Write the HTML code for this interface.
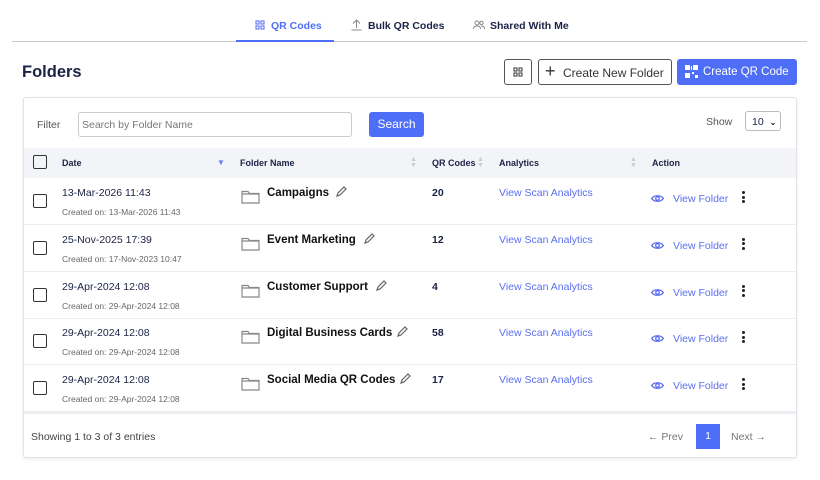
<!DOCTYPE html>
<html><head><style>
*{box-sizing:border-box;margin:0;padding:0}
body{width:820px;height:480px;background:#fff;font-family:"Liberation Sans",sans-serif;color:#1b2245;position:relative;overflow:hidden}
.a{position:absolute}
.tab{font-size:10.5px;font-weight:bold;top:20px}
.btn{border:1px solid #555;border-radius:3px;background:#fff}
.hd{font-size:9px;font-weight:bold;top:158px}
.cb{width:14px;height:14px;border:1.6px solid #333;border-radius:2px}
.d1{font-size:10.5px;color:#1b2245}
.d2{font-size:8.5px;color:#666}
.nm{font-size:11.5px;font-weight:bold;color:#111}
.lnk{font-size:10.5px;color:#5a6ff0}
.sort{font-size:7px;color:#ccc;line-height:6px}
</style></head><body>
<div class="a" style="left:12px;top:41px;width:795px;height:1px;background:#ccc"></div>
<div class="a" style="left:236px;top:40px;width:98px;height:2px;background:#4f6ef7"></div>
<svg class="a" style="left:255px;top:20px" width="10" height="10" viewBox="0 0 10 10" fill="none" stroke="#6b7ff5" stroke-width="1.2"><rect x="1" y="1" width="3" height="3"/><rect x="6" y="1" width="3" height="3"/><rect x="1" y="6" width="3" height="3"/><rect x="6" y="6" width="3" height="3"/></svg>
<div class="a tab" style="left:271px;color:#4f6ef7">QR Codes</div>
<svg class="a" style="left:351px;top:19px" width="11" height="12" viewBox="0 0 11 12" fill="none" stroke="#888" stroke-width="1"><path d="M5.5 9V1M2 4.5l3.5-3.5 3.5 3.5M0.5 11h10"/></svg>
<div class="a tab" style="left:368px">Bulk QR Codes</div>
<svg class="a" style="left:473px;top:20px" width="12" height="10" viewBox="0 0 12 10" fill="none" stroke="#888" stroke-width="1"><circle cx="4" cy="3" r="2"/><circle cx="8.5" cy="3" r="1.7"/><path d="M0.5 9c0-2 1.5-3 3.5-3s3.5 1 3.5 3M8 6c2 0 3.5 1 3.5 3"/></svg>
<div class="a tab" style="left:490px">Shared With Me</div>
<div class="a" style="left:22px;top:63px;font-size:16.5px;font-weight:bold;color:#1b2245">Folders</div>
<div class="a btn" style="left:504px;top:59px;width:28px;height:26px"></div>
<svg class="a" style="left:513px;top:67px" width="10" height="10" viewBox="0 0 10 10" fill="none" stroke="#444" stroke-width="1.1"><rect x="1" y="1" width="3" height="3"/><rect x="6" y="1" width="3" height="3"/><rect x="1" y="6" width="3" height="3"/><rect x="6" y="6" width="3" height="3"/></svg>
<div class="a btn" style="left:538px;top:59px;width:134px;height:26px"></div>
<div class="a" style="left:545px;top:60px;font-size:18px;color:#333;line-height:22px">+</div>
<div class="a" style="left:563px;top:66px;font-size:12px;color:#333">Create New Folder</div>
<div class="a" style="left:677px;top:59px;width:120px;height:26px;background:#4f6ef7;border-radius:3px"></div>
<svg class="a" style="left:685px;top:65px" width="13" height="13" viewBox="0 0 13 13" fill="#fff"><rect x="0" y="0" width="5" height="5"/><rect x="8" y="0" width="5" height="5"/><rect x="0" y="8" width="5" height="5"/><rect x="7" y="7" width="2" height="2"/><rect x="10" y="10" width="3" height="3"/><rect x="6" y="1" width="1" height="4"/></svg>
<div class="a" style="left:703px;top:66px;font-size:11.5px;color:#fff">Create QR Code</div>
<div class="a" style="left:23px;top:97px;width:774px;height:361px;border:1px solid #e3e3e8;border-radius:3px;box-shadow:0 1px 3px rgba(0,0,0,.08)"></div>
<div class="a" style="left:37px;top:119px;font-size:10.5px;color:#555">Filter</div>
<div class="a" style="left:78px;top:112px;width:274px;height:25px;border:1px solid #ccc;border-radius:3px"></div>
<div class="a" style="left:82px;top:119px;font-size:10.5px;color:#777">Search by Folder Name</div>
<div class="a" style="left:369px;top:112px;width:55px;height:25px;background:#4f6ef7;border-radius:3px;color:#fff;font-size:12px;text-align:center;line-height:25px">Search</div>
<div class="a" style="left:706px;top:116px;font-size:10.5px;color:#555">Show</div>
<div class="a" style="left:745px;top:111px;width:36px;height:20px;border:1px solid #bbb;border-radius:3px;font-size:10.5px;padding:4px 0 0 6px">10 <span style="font-size:8px;font-weight:bold;margin-left:3px">&#8964;</span></div>
<div class="a" style="left:24px;top:148px;width:772px;height:30px;background:#f3f4f8"></div>
<div class="a cb" style="left:33px;top:155px"></div>
<div class="a hd" style="left:62px">Date</div>
<div class="a" style="left:217px;top:158px;font-size:8px;color:#6b7ff5">&#9660;</div>
<div class="a hd" style="left:240px">Folder Name</div>
<div class="a sort" style="left:410px;top:157px">▲<br>▼</div>
<div class="a hd" style="left:432px">QR Codes</div>
<div class="a sort" style="left:477px;top:157px">▲<br>▼</div>
<div class="a hd" style="left:499px">Analytics</div>
<div class="a sort" style="left:630px;top:157px">▲<br>▼</div>
<div class="a hd" style="left:652px">Action</div>
<div id="rows"></div>
<script>
var R=[["13-Mar-2026 11:43","13-Mar-2026 11:43","Campaigns",20,336],["25-Nov-2025 17:39","17-Nov-2023 10:47","Event Marketing",12,364],["29-Apr-2024 12:08","29-Apr-2024 12:08","Customer Support",4,376],["29-Apr-2024 12:08","29-Apr-2024 12:08","Digital Business Cards",58,397],["29-Apr-2024 12:08","29-Apr-2024 12:08","Social Media QR Codes",17,400]];
var h="";R.forEach(function(r,i){var y=179+i*46.8;
h+='<div class="a" style="left:24px;top:'+(y+45)+'px;width:772px;height:1px;background:#ececf0"></div>';
h+='<div class="a cb" style="left:33px;top:'+(y+15)+'px"></div>';
h+='<div class="a d1" style="left:62px;top:'+(y+8)+'px">'+r[0]+'</div>';
h+='<div class="a d2" style="left:62px;top:'+(y+28)+'px">Created on: '+r[1]+'</div>';
h+='<svg class="a" style="left:241px;top:'+(y+10)+'px" width="19" height="15" viewBox="0 0 19 15" fill="none" stroke="#888" stroke-width="1.2"><path d="M1 2.5h6l1.5 2H18v9.5H1z M1 5h17"/></svg>';
h+='<div class="a nm" style="left:267px;top:'+(y+8)+'px">'+r[2]+'</div>';
h+='<svg class="a" style="left:'+r[4]+'px;top:'+(y+7)+'px" width="11" height="11" viewBox="0 0 11 11" fill="none" stroke="#666" stroke-width="1.2"><path d="M1 10l1-3 6-6 2 2-6 6z"/></svg>';
h+='<div class="a" style="left:432px;top:'+(y+8)+'px;font-size:10.5px;font-weight:bold">'+r[3]+'</div>';
h+='<div class="a lnk" style="left:499px;top:'+(y+8)+'px">View Scan Analytics</div>';
h+='<svg class="a" style="left:651px;top:'+(y+15)+'px" width="13" height="9" viewBox="0 0 13 9" fill="none" stroke="#5a6ff0" stroke-width="1.3"><path d="M0.7 4.5C3 0.8 10 0.8 12.3 4.5 10 8.2 3 8.2 0.7 4.5z"/><circle cx="6.5" cy="4.5" r="1.8"/></svg>';
h+='<div class="a lnk" style="left:673px;top:'+(y+14)+'px">View Folder</div>';
h+='<div class="a" style="left:742px;top:'+(y+12)+'px;width:3px"><div style="width:3px;height:3px;background:#222;border-radius:50%;margin-bottom:1.5px"></div><div style="width:3px;height:3px;background:#222;border-radius:50%;margin-bottom:1.5px"></div><div style="width:3px;height:3px;background:#222;border-radius:50%"></div></div>';
});document.getElementById("rows").innerHTML=h;
</script>
<div class="a" style="left:24px;top:412px;width:772px;height:2px;background:#eeeef3"></div>
<div class="a" style="left:31px;top:431px;font-size:10.5px;color:#444">Showing 1 to 3 of 3 entries</div>
<div class="a" style="left:648px;top:431px;font-size:10.5px;color:#777">&#8592; Prev</div>
<div class="a" style="left:696px;top:424px;width:24px;height:25px;background:#4f6ef7;color:#fff;font-size:10.5px;text-align:center;line-height:25px">1</div>
<div class="a" style="left:731px;top:431px;font-size:10.5px;color:#777">Next &#8594;</div>
</body></html>
